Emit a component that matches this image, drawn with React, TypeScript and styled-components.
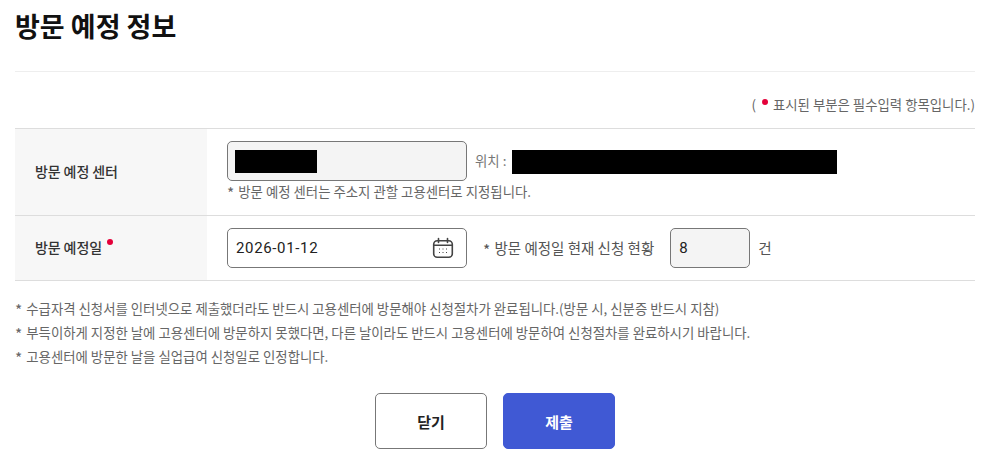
import React from 'react';
import styled, { createGlobalStyle } from 'styled-components';

const GlobalStyle = createGlobalStyle`
html, body {
    margin: 0;
    padding: 0;
    background: #fff;
    font-family: "Noto Sans CJK KR", "Noto Sans", sans-serif;
    color: #444;
}
* { box-sizing: border-box; }
`;

const Page = styled.div`
width: 993px;
height: 475px;
padding: 0 18px 0 15px;
overflow: hidden;
`;

const TitleBar = styled.div`
height: 72px;
padding-top: 7px;
border-bottom: 1px solid #eee;
`;

const Title = styled.h1`
margin: 0;
font-size: 27px;
line-height: 38px;
font-weight: 700;
color: #111;
letter-spacing: 0;
`;

const RequiredNote = styled.p`
margin: 0;
height: 56px;
padding-top: 22px;
display: flex;
justify-content: flex-end;
align-items: center;
font-size: 13.4px;
line-height: 20px;
color: #666;
padding-bottom: 14px;
`;

const Dot = styled.i<{ $top?: number }>`
display: inline-block;
width: 6px;
height: 6px;
border-radius: 50%;
background: #e4003a;
position: relative;
top: ${({ $top }) => $top ?? -2}px;
`;

const NoteDot = styled(Dot)`
margin: 0 5px 0 6px;
`;

const Table = styled.div`
border-top: 1px solid #ddd;
`;

const Row = styled.div<{ $height: number }>`
display: flex;
height: ${({ $height }) => $height}px;
border-bottom: 1px solid #ddd;
`;

const Label = styled.div`
width: 192px;
flex-shrink: 0;
background: #f7f7f7;
padding: 0 0 2px 20px;
display: flex;
align-items: center;
gap: 5px;
font-size: 14px;
font-weight: 500;
letter-spacing: -0.1px;
color: #333;
`;

const Cell = styled.div`
flex: 1;
padding: 12px 0 0 20px;
`;

const Line = styled.div`
display: flex;
align-items: center;
height: 40px;
`;

const Field = styled.div<{ $width: number; $readOnly?: boolean }>`
width: ${({ $width }) => $width}px;
height: 40px;
flex-shrink: 0;
display: flex;
align-items: center;
justify-content: space-between;
padding: 0 12px 0 8px;
border: 1px solid #777;
border-radius: 5px;
background: ${({ $readOnly }) => ($readOnly ? '#f4f4f4' : '#fff')};
font-family: "Roboto", "Noto Sans CJK KR", sans-serif;
font-size: 15px;
letter-spacing: 0.65px;
color: #222;
`;

const Redacted = styled.div<{ $width: number; $height: number }>`
width: ${({ $width }) => $width}px;
height: ${({ $height }) => $height}px;
background: #000;
`;

const CenterMask = styled(Redacted)`
margin: 1px 0 0 -1px;
`;

const PlaceMask = styled(Redacted)`
margin-top: 2px;
`;

const Place = styled.span`
margin: 0 4px 2px 8px;
width: 33px;
font-size: 13.4px;
color: #777;
white-space: pre;
`;

const Hint = styled.p`
margin: 0;
font-size: 13.4px;
line-height: 20px;
color: #666;
`;

const Status = styled.span`
margin: 0 16px 1px 16px;
font-size: 14.5px;
color: #555;
`;

const Mark = styled.span`
position: relative;
top: 2px;
margin-right: 1px;
font-size: 15.5px;
line-height: 1;
`;

const Unit = styled.span`
margin: 0 0 1px 8px;
font-size: 14.6px;
color: #555;
`;

const Notes = styled.ul`
list-style: none;
margin: 15px 0 0;
padding: 0;
`;

const Note = styled.li`
height: 24px;
font-size: 13.4px;
line-height: 24px;
color: #666;
white-space: nowrap;
`;

const Actions = styled.div`
display: flex;
justify-content: center;
gap: 16px;
margin-top: 25px;
padding-right: 0;
`;

const Action = styled.button<{ $primary?: boolean }>`
width: 112px;
height: 56px;
border-radius: 5px;
border: 1px solid ${({ $primary }) => ($primary ? '#4059d4' : '#777')};
background: ${({ $primary }) => ($primary ? '#4059d4' : '#fff')};
color: ${({ $primary }) => ($primary ? '#fff' : '#222')};
font-family: inherit;
font-size: 15px;
font-weight: 700;
padding: 0;
`;

function CalendarIcon() {
    return (
        <svg width="22" height="22" viewBox="0 0 22 22" fill="none" stroke="#444" strokeWidth="1.6" strokeLinecap="round">
            <rect x="1.7" y="3.7" width="18.6" height="16.6" rx="3.5" />
            <path d="M2 8.2h18M6.5 1.5v4M15.5 1.5v4" />
            <path d="M7 12h1M10.5 12h1M14 12h1M7 15.5h1M10.5 15.5h1M14 15.5h1" strokeWidth="1.2" strokeLinecap="butt" />
        </svg>
    );
}

export default function App() {
    return (
        <Page>
            <GlobalStyle />
            <TitleBar>
                <Title>방문 예정 정보</Title>
            </TitleBar>
            <RequiredNote>
                (<NoteDot />표시된 부분은 필수입력 항목입니다.)
            </RequiredNote>
            <Table>
                <Row $height={87}>
                    <Label>방문 예정 센터</Label>
                    <Cell>
                        <Line>
                            <Field $width={240} $readOnly>
                                <CenterMask $width={82} $height={23} />
                            </Field>
                            <Place>위치 :</Place>
                            <PlaceMask $width={325} $height={24} />
                        </Line>
                        <Hint><Mark>*</Mark> 방문 예정 센터는 주소지 관할 고용센터로 지정됩니다.</Hint>
                    </Cell>
                </Row>
                <Row $height={65}>
                    <Label>
                        방문 예정일
                        <Dot $top={-5} />
                    </Label>
                    <Cell>
                        <Line>
                            <Field $width={240}>
                                2026-01-12
                                <CalendarIcon />
                            </Field>
                            <Status>
                                <Mark>*</Mark> 방문 예정일 현재 신청 현황
                            </Status>
                            <Field $width={80} $readOnly>8</Field>
                            <Unit>건</Unit>
                        </Line>
                    </Cell>
                </Row>
            </Table>
            <Notes>
                <Note><Mark>*</Mark> 수급자격 신청서를 인터넷으로 제출했더라도 반드시 고용센터에 방문해야 신청절차가 완료됩니다.(방문 시, 신분증 반드시 지참)</Note>
                <Note><Mark>*</Mark> 부득이하게 지정한 날에 고용센터에 방문하지 못했다면, 다른 날이라도 반드시 고용센터에 방문하여 신청절차를 완료하시기 바랍니다.</Note>
                <Note><Mark>*</Mark> 고용센터에 방문한 날을 실업급여 신청일로 인정합니다.</Note>
            </Notes>
            <Actions>
                <Action>닫기</Action>
                <Action $primary>제출</Action>
            </Actions>
        </Page>
    );
}
